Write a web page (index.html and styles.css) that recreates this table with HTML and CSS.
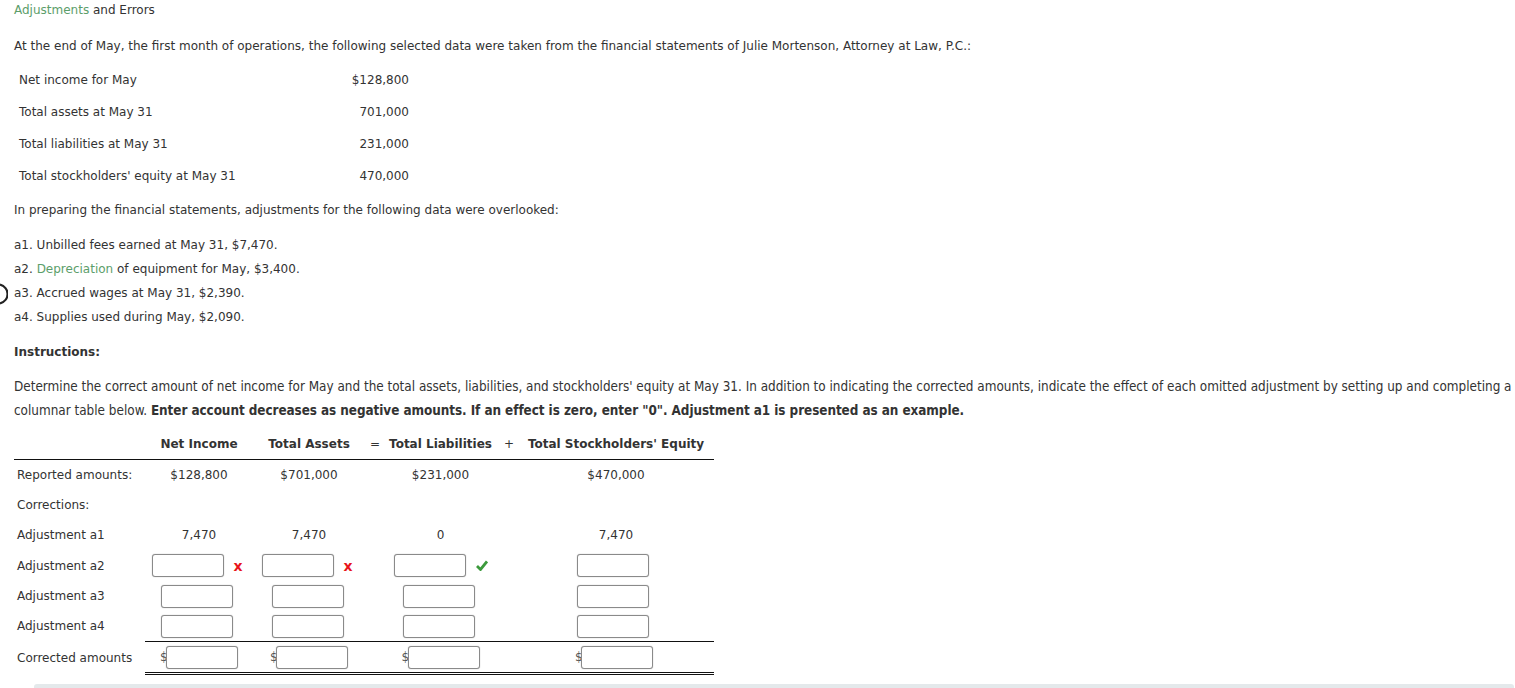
FILE: index.html
```html
<!DOCTYPE html>
<html>
<head>
<meta charset="utf-8">
<link rel="stylesheet" href="styles.css">
</head>
<body>
<div class="page">
  <svg class="arc" width="8" height="22" viewBox="0 0 8 22"><path d="M0 1.5 A 11 10 0 0 1 0 20.5" fill="none" stroke="#222" stroke-width="2.2"/></svg>
  <div class="title"><span class="link">Adjustments</span> and Errors</div>
  <p class="intro">At the end of May, the first month of operations, the following selected data were taken from the financial statements of Julie Mortenson, Attorney at Law, P.C.:</p>
  <div class="data">
    <div class="drow"><span>Net income for May</span><span class="dval">$128,800</span></div>
    <div class="drow"><span>Total assets at May 31</span><span class="dval">701,000</span></div>
    <div class="drow"><span>Total liabilities at May 31</span><span class="dval">231,000</span></div>
    <div class="drow"><span>Total stockholders' equity at May 31</span><span class="dval">470,000</span></div>
  </div>
  <p class="prep">In preparing the financial statements, adjustments for the following data were overlooked:</p>
  <ul class="items">
    <li>a1. Unbilled fees earned at May 31, $7,470.</li>
    <li>a2. <span class="link">Depreciation</span> of equipment for May, $3,400.</li>
    <li>a3. Accrued wages at May 31, $2,390.</li>
    <li>a4. Supplies used during May, $2,090.</li>
  </ul>
  <p class="instr-head">Instructions:</p>
  <p class="instr">Determine the correct amount of net income for May and the total assets, liabilities, and stockholders' equity at May 31. In addition to indicating the corrected amounts, indicate the effect of each omitted adjustment by setting up and completing a columnar table below. <strong>Enter account decreases as negative amounts. If an effect is zero, enter "0". Adjustment a1 is presented as an example.</strong></p>

  <table class="sheet">
    <colgroup>
      <col class="c-label"><col class="c-ni"><col class="c-ta"><col class="c-op"><col class="c-tl"><col class="c-op2"><col class="c-eq">
    </colgroup>
    <tr class="head">
      <th></th><th>Net Income</th><th>Total Assets</th><th class="op">=</th><th>Total Liabilities</th><th class="op">+</th><th class="eq">Total Stockholders' Equity</th>
    </tr>
    <tr>
      <td class="lbl">Reported amounts:</td><td>$128,800</td><td>$701,000</td><td></td><td>$231,000</td><td></td><td class="eq">$470,000</td>
    </tr>
    <tr>
      <td class="lbl">Corrections:</td><td></td><td></td><td></td><td></td><td></td><td></td>
    </tr>
    <tr>
      <td class="lbl">Adjustment a1</td><td>7,470</td><td>7,470</td><td></td><td>0</td><td></td><td class="eq">7,470</td>
    </tr>
    <tr class="r-a2">
      <td class="lbl">Adjustment a2</td>
      <td><span class="grp sl"><input class="box" type="text"><span class="mark wrong">x</span></span></td>
      <td><span class="grp sl"><input class="box" type="text"><span class="mark wrong">x</span></span></td>
      <td></td>
      <td><span class="grp"><input class="box" type="text"><svg class="mark check" width="12" height="11" viewBox="0 0 12 11"><path d="M1 6 L4.5 9.5 L11 1.5" fill="none" stroke="#3c9a3c" stroke-width="2.8" stroke-linejoin="miter"/></svg></span></td>
      <td></td>
      <td class="eq"><input class="box se" type="text"></td>
    </tr>
    <tr class="r-a3">
      <td class="lbl">Adjustment a3</td>
      <td><input class="box sh" type="text"></td>
      <td><input class="box sh2" type="text"></td>
      <td></td>
      <td><input class="box sh" type="text"></td>
      <td></td>
      <td class="eq"><input class="box se" type="text"></td>
    </tr>
    <tr class="r-a4">
      <td class="lbl">Adjustment a4</td>
      <td><input class="box sh" type="text"></td>
      <td><input class="box sh2" type="text"></td>
      <td></td>
      <td><input class="box sh" type="text"></td>
      <td></td>
      <td class="eq"><input class="box se" type="text"></td>
    </tr>
    <tr class="total">
      <td class="lbl">Corrected amounts</td>
      <td><span class="cgrp"><span class="dollar">$</span><input class="box" type="text"></span></td>
      <td><span class="cgrp"><span class="dollar">$</span><input class="box" type="text"></span></td>
      <td></td>
      <td><span class="cgrp"><span class="dollar">$</span><input class="box" type="text"></span></td>
      <td></td>
      <td class="eq"><span class="cgrp se2"><span class="dollar">$</span><input class="box" type="text"></span></td>
    </tr>
  </table>
  <div class="bar"></div>
</div>
</body>
</html>
```

FILE: styles.css
```css
html, body {
  margin: 0;
  padding: 0;
  background: #fff;
}
body {
  font-family: "DejaVu Sans", Verdana, sans-serif;
  font-size: 12px;
  color: #333;
  overflow: hidden;
}
.page {
  position: relative;
  padding-left: 14px;
  padding-top: 1px;
}
.arc {
  position: absolute;
  left: 0;
  top: 283px;
}
.title {
  line-height: 18px;
}
.link {
  color: #5c9e6a;
}
p {
  margin: 0;
}
.intro {
  margin-top: 18px;
  line-height: 18px;
}
.data {
  margin-top: 9px;
  width: 400px;
}
.drow {
  display: flex;
  justify-content: space-between;
  height: 32px;
  align-items: center;
  padding: 0 5px;
}
.prep {
  margin-top: 9px;
  line-height: 18px;
}
.items {
  list-style: none;
  margin: 14px 0 0;
  padding: 0;
}
.items li {
  line-height: 24px;
}
.instr-head {
  margin-top: 14px;
  line-height: 18px;
  font-weight: bold;
}
.instr {
  margin-top: 14px;
  line-height: 24px;
  font-family: "DejaVu Sans Condensed", "DejaVu Sans", sans-serif;
  font-stretch: condensed;
  font-size: 13.4px;
}
.instr strong {
  font-weight: bold;
  letter-spacing: -0.06px;
}
.sheet {
  margin-top: 5px;
  border-collapse: collapse;
  table-layout: fixed;
  width: 700px;
}
.c-label { width: 131px; }
.c-ni { width: 108px; }
.c-ta { width: 112px; }
.c-op { width: 20px; }
.c-tl { width: 111px; }
.c-op2 { width: 26px; }
.c-eq { width: 192px; }
.sheet th {
  height: 31px;
  padding: 0;
  font-weight: bold;
  text-align: center;
  white-space: nowrap;
  border-bottom: 1px solid #111;
  vertical-align: middle;
}
.sheet th.op {
  font-weight: normal;
}
.sheet td {
  height: 30px;
  padding: 0;
  text-align: center;
  vertical-align: middle;
  white-space: nowrap;
}
.sheet .eq {
  padding-right: 4px;
}
.sheet td.lbl {
  text-align: left;
  padding-left: 3px;
}
.sheet tr.r-a2 td { height: 31px; }
.sheet tr.total td:not(.lbl) {
  border-top: 1px solid #111;
  border-bottom: 3px double #111;
}
.grp {
  display: inline-flex;
  align-items: center;
  gap: 10px;
  vertical-align: middle;
}
.grp.sl {
  position: relative;
  left: -2px;
}
.cgrp {
  display: inline-flex;
  align-items: center;
  vertical-align: middle;
}
.cgrp.se2 {
  position: relative;
  left: -2px;
}
.box {
  display: inline-block;
  vertical-align: middle;
  box-sizing: border-box;
  width: 72px;
  height: 23px;
  margin: 0;
  padding: 0;
  border: 1px solid #8a8a8a;
  border-radius: 3px;
  box-shadow: 0 0 1px #9a9a9a;
  background: #fff;
}
.box.sh {
  position: relative;
  left: -2px;
}
.box.sh2 {
  position: relative;
  left: -1px;
}
.box.se {
  position: relative;
  left: -3px;
}
.mark.wrong {
  color: #e8141b;
  font-weight: bold;
  font-size: 14px;
  line-height: 14px;
  width: 9px;
}
.mark.check {
  display: block;
}
.dollar {
  color: #555;
  display: inline-block;
  width: 6px;
  text-align: left;
  overflow: visible;
}
.bar {
  margin-top: 9px;
  margin-left: 20px;
  width: 1480px;
  height: 8px;
  background: #e4e9eb;
  border-radius: 3px;
}
```
